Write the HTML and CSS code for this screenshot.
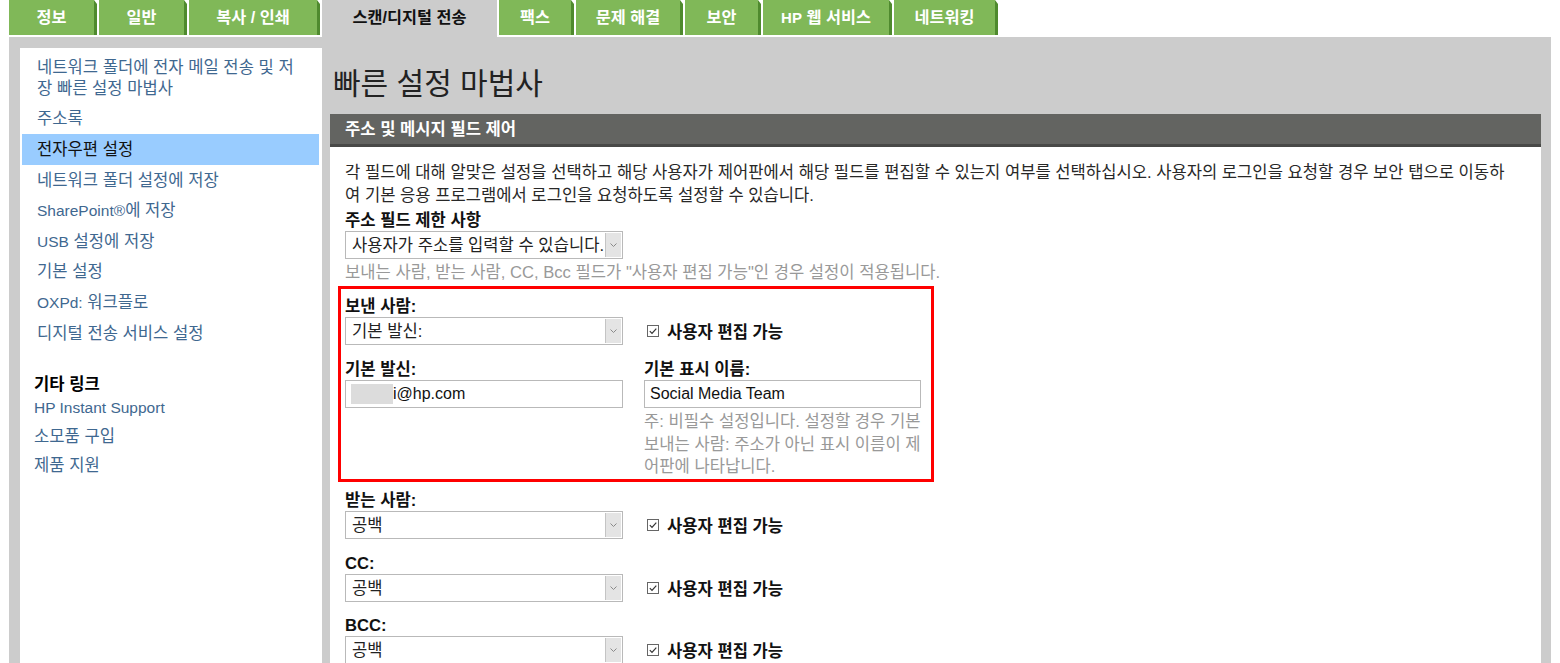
FILE: index.html
```html
<!DOCTYPE html>
<html>
<head>
    <meta charset="utf-8">
    <title>스캔/디지털 전송 - 전자우편 설정</title>
    <link rel="stylesheet" href="styles.css">
</head>
<body>
    <div class="tabs">
        <a class="tab tab-info">정보</a>
        <a class="tab tab-general">일반</a>
        <a class="tab tab-copy">복사 / 인쇄</a>
        <a class="tab tab-scan active">스캔/디지털 전송</a>
        <a class="tab tab-fax">팩스</a>
        <a class="tab tab-trouble">문제 해결</a>
        <a class="tab tab-security">보안</a>
        <a class="tab tab-web"><span class="en">HP</span> 웹 서비스</a>
        <a class="tab tab-net">네트워킹</a>
    </div>

    <div class="frame">
        <div class="sidebar">
            <ul class="nav">
                <li>네트워크 폴더에 전자 메일 전송 및 저<br>장 빠른 설정 마법사</li>
                <li>주소록</li>
                <li class="selected">전자우편 설정</li>
                <li>네트워크 폴더 설정에 저장</li>
                <li><span class="en">SharePoint®</span>에 저장</li>
                <li><span class="en">USB</span> 설정에 저장</li>
                <li>기본 설정</li>
                <li><span class="en">OXPd:</span> 워크플로</li>
                <li>디지털 전송 서비스 설정</li>
            </ul>
            <h4 class="other-title">기타 링크</h4>
            <ul class="other">
                <li><span class="en">HP Instant Support</span></li>
                <li>소모품 구입</li>
                <li>제품 지원</li>
            </ul>
        </div>

        <div class="main">
            <h1>빠른 설정 마법사</h1>
            <div class="panel">
                <div class="panel-head">주소 및 메시지 필드 제어</div>
                <div class="panel-body">
                    <p class="desc">각 필드에 대해 알맞은 설정을 선택하고 해당 사용자가 제어판에서 해당 필드를 편집할 수 있는지 여부를 선택하십시오. 사용자의 로그인을 요청할 경우 보안 탭으로 이동하<br>여 기본 응용 프로그램에서 로그인을 요청하도록 설정할 수 있습니다.</p>

                    <div class="label">주소 필드 제한 사항</div>
                    <div class="select">
                        <span>사용자가 주소를 입력할 수 있습니다.</span>
                        <span class="arrow"><svg width="7" height="4" viewBox="0 0 7 4"><path d="M0.5 0.5 L3.5 3.5 L6.5 0.5" fill="none" stroke="#8a8a8a" stroke-width="1"/></svg></span>
                    </div>
                    <div class="note">보내는 사람, 받는 사람, CC, Bcc 필드가 "사용자 편집 가능"인 경우 설정이 적용됩니다.</div>

                    <div class="highlight">
                        <div class="label">보낸 사람:</div>
                        <div class="row">
                            <div class="select">
                                <span>기본 발신:</span>
                                <span class="arrow"><svg width="7" height="4" viewBox="0 0 7 4"><path d="M0.5 0.5 L3.5 3.5 L6.5 0.5" fill="none" stroke="#8a8a8a" stroke-width="1"/></svg></span>
                            </div>
                            <label class="check">
                                <svg width="12" height="12" viewBox="0 0 12 12"><rect x="0.5" y="0.5" width="11" height="11" fill="#fff" stroke="#666"/><path d="M2.8 6.2 L5 8.4 L9.3 3.6" fill="none" stroke="#333" stroke-width="1.2"/></svg>
                                사용자 편집 가능
                            </label>
                        </div>

                        <div class="cols">
                            <div>
                                <div class="label">기본 발신:</div>
                                <div class="input"><span class="blur"></span>i@hp.com</div>
                            </div>
                            <div>
                                <div class="label">기본 표시 이름:</div>
                                <div class="input">Social Media Team</div>
                                <div class="note small">주: 비필수 설정입니다. 설정할 경우 기본<br>보내는 사람: 주소가 아닌 표시 이름이 제<br>어판에 나타납니다.</div>
                            </div>
                        </div>
                    </div>

                    <div class="field">
                        <div class="label">받는 사람:</div>
                        <div class="row">
                            <div class="select">
                                <span>공백</span>
                                <span class="arrow"><svg width="7" height="4" viewBox="0 0 7 4"><path d="M0.5 0.5 L3.5 3.5 L6.5 0.5" fill="none" stroke="#8a8a8a" stroke-width="1"/></svg></span>
                            </div>
                            <label class="check">
                                <svg width="12" height="12" viewBox="0 0 12 12"><rect x="0.5" y="0.5" width="11" height="11" fill="#fff" stroke="#666"/><path d="M2.8 6.2 L5 8.4 L9.3 3.6" fill="none" stroke="#333" stroke-width="1.2"/></svg>
                                사용자 편집 가능
                            </label>
                        </div>
                    </div>

                    <div class="field">
                        <div class="label">CC:</div>
                        <div class="row">
                            <div class="select">
                                <span>공백</span>
                                <span class="arrow"><svg width="7" height="4" viewBox="0 0 7 4"><path d="M0.5 0.5 L3.5 3.5 L6.5 0.5" fill="none" stroke="#8a8a8a" stroke-width="1"/></svg></span>
                            </div>
                            <label class="check">
                                <svg width="12" height="12" viewBox="0 0 12 12"><rect x="0.5" y="0.5" width="11" height="11" fill="#fff" stroke="#666"/><path d="M2.8 6.2 L5 8.4 L9.3 3.6" fill="none" stroke="#333" stroke-width="1.2"/></svg>
                                사용자 편집 가능
                            </label>
                        </div>
                    </div>

                    <div class="field">
                        <div class="label">BCC:</div>
                        <div class="row">
                            <div class="select">
                                <span>공백</span>
                                <span class="arrow"><svg width="7" height="4" viewBox="0 0 7 4"><path d="M0.5 0.5 L3.5 3.5 L6.5 0.5" fill="none" stroke="#8a8a8a" stroke-width="1"/></svg></span>
                            </div>
                            <label class="check">
                                <svg width="12" height="12" viewBox="0 0 12 12"><rect x="0.5" y="0.5" width="11" height="11" fill="#fff" stroke="#666"/><path d="M2.8 6.2 L5 8.4 L9.3 3.6" fill="none" stroke="#333" stroke-width="1.2"/></svg>
                                사용자 편집 가능
                            </label>
                        </div>
                    </div>
                </div>
            </div>
        </div>
    </div>
</body>
</html>
```

FILE: styles.css
```css
body {
    margin: 0;
    font-family: "Liberation Sans", "Noto Sans CJK KR", sans-serif;
    font-size: 16.6px;
    color: #222;
    background: #fff;
}

.en {
    font-size: 15.5px;
}

/* top tabs */
.tabs {
    display: flex;
    align-items: flex-start;
    gap: 2px;
    padding-left: 9px;
    height: 37px;
}

.tab {
    position: relative;
    box-sizing: border-box;
    height: 35px;
    line-height: 34px;
    text-align: center;
    font-weight: bold;
    font-size: 16.3px;
    color: #fff;
    background: #80b858;
    border-right: 3px solid #4f8a2e;
}

.tab .en {
    font-size: 15px;
}

.tab::after {
    content: "";
    position: absolute;
    top: 0;
    right: -3px;
    border-top: 4px solid #fff;
    border-left: 3px solid transparent;
}

.tab.active {
    height: 37px;
    color: #111;
    background: #ccc;
    border-right: none;
}

.tab.active::after {
    display: none;
}

.tab-info { width: 88px; }
.tab-general { width: 88px; }
.tab-copy { width: 131px; }
.tab-scan { width: 175px; }
.tab-fax { width: 75px; }
.tab-trouble { width: 107px; }
.tab-security { width: 76px; }
.tab-web { width: 129px; }
.tab-net { width: 104px; }

/* grey frame */
.frame {
    display: flex;
    gap: 8px;
    margin: 0 9px;
    padding: 11px 10px 0 11px;
    background: #ccc;
    min-height: 700px;
}

.sidebar {
    width: 302px;
    flex-shrink: 0;
    background: #fff;
    padding: 4px 3px 0 2px;
    box-sizing: border-box;
}

.nav {
    list-style: none;
    margin: 0;
    padding: 0;
}

.nav li {
    padding: 4.8px 0 4.8px 15px;
    line-height: 21px;
    color: #3f6890;
}

.nav li.selected {
    background: #99ccff;
    color: #111;
}

.other-title {
    margin: 26px 0 0 12px;
    font-size: 16.6px;
    line-height: 21px;
    color: #000;
}

.other {
    list-style: none;
    margin: 0;
    padding: 0 0 0 12px;
}

.other li {
    line-height: 21px;
    padding: 4px 0;
    color: #3f6890;
}

.other li:first-child {
    padding-top: 2px;
}

/* main column */
.main {
    flex: 1;
}

h1 {
    margin: 19px 0 13px 3px;
    font-size: 30px;
    line-height: 34px;
    font-weight: normal;
    color: #222;
}

.panel {
    background: #fff;
    min-height: 600px;
}

.panel-head {
    height: 30px;
    line-height: 32px;
    padding-left: 15px;
    background: #636461;
    border-bottom: 3px solid #484947;
    color: #fff;
    font-weight: bold;
}

.panel-body {
    padding: 13.5px 15px 20px 15px;
}

.desc {
    margin: 0;
    line-height: 23px;
    color: #282828;
}

.label {
    font-weight: bold;
    line-height: 20px;
    padding-top: 4px;
    color: #111;
}

.select {
    box-sizing: border-box;
    width: 278px;
    height: 28px;
    border: 1px solid #b9b9b9;
    padding-left: 6px;
    line-height: 28px;
    background: #fff;
    color: #222;
    display: flex;
    justify-content: space-between;
    white-space: nowrap;
}

.arrow {
    width: 15px;
    margin: 1px 1px 1px 0;
    background: #e4e4e4;
    border-left: 1px solid #c4c4c4;
    display: flex;
    align-items: center;
    justify-content: center;
}

.note {
    margin-top: 3px;
    line-height: 22px;
    color: #999;
}

.note.small {
    margin-top: 3.3px;
    line-height: 22.5px;
    white-space: nowrap;
}

.highlight {
    margin: 2.5px 0 0 -7px;
    width: 596px;
    box-sizing: border-box;
    border: 3px solid #ff0000;
    padding: 4px 0 0 4px;
}

.row {
    display: flex;
    align-items: center;
}

.check {
    display: flex;
    align-items: center;
    gap: 8px;
    margin-left: 24px;
    font-weight: bold;
    color: #111;
}

.cols {
    display: grid;
    grid-template-columns: 278px 277px;
    column-gap: 21px;
    margin-top: 11px;
}

.input {
    box-sizing: border-box;
    height: 28px;
    border: 1px solid #b9b9b9;
    padding-left: 5px;
    font-size: 16px;
    color: #111;
    display: flex;
    align-items: center;
}

.blur {
    display: inline-block;
    width: 42px;
    height: 20px;
    background: #dcdcdc;
}

.field {
    margin-top: 10.5px;
}

.highlight + .field {
    margin-top: 5.5px;
}
```
